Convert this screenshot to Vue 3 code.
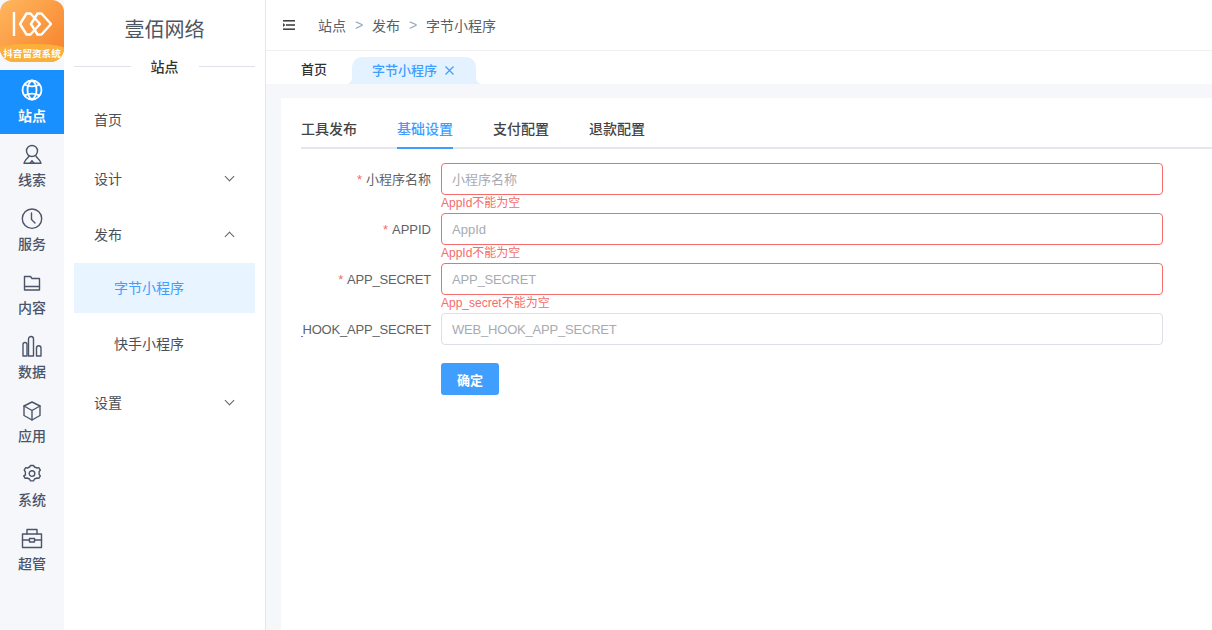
<template>
  <div class="layout">
    <!-- 一级导航 -->
    <aside class="rail">
      <div class="logo">
        <svg class="logo-mark" width="40" height="26" viewBox="0 0 40 26" fill="none" stroke="#fff" stroke-width="2.400" stroke-linejoin="round">
          <path d="M2 1v24" />
          <path d="M14.500 2.500h4L28 13l-9.500 10.500h-4L8 13z" />
          <path d="M25.500 2.500h4L39 13l-9.500 10.500h-4L19 13z" />
        </svg>
        <div class="logo-band">抖音留资系统</div>
      </div>
      <nav class="rail-nav">
        <div v-for="item in railItems" :key="item.label" class="rail-item" :class="{ active: item.active }">
          <svg width="24" height="24" viewBox="0 0 24 24" fill="none" stroke="currentColor" stroke-width="1.4" stroke-linecap="round" stroke-linejoin="round">
            <path v-for="d in item.paths" :key="d" :d="d" />
          </svg>
          <span>{{ item.label }}</span>
        </div>
      </nav>
    </aside>

    <!-- 二级菜单 -->
    <aside class="side">
      <div class="brand">壹佰网络</div>
      <div class="divider"><span>站点</span></div>
      <div class="menu">
        <div class="menu-item first">首页</div>
        <div class="menu-item design">设计<i class="chev"></i></div>
        <div class="menu-item publish">发布<i class="chev up"></i></div>
        <div class="menu-sub active">字节小程序</div>
        <div class="menu-sub">快手小程序</div>
        <div class="menu-item setting">设置<i class="chev"></i></div>
      </div>
    </aside>

    <main class="main">
      <header class="topbar">
        <svg class="fold" width="12" height="10" viewBox="0 0 12 10" fill="#444">
          <rect x="0" y="0" width="12" height="1.600" />
          <rect x="3" y="4.200" width="9" height="1.600" />
          <path d="M0 3 2.400 5 0 7z" />
          <rect x="0" y="8.400" width="12" height="1.600" />
        </svg>
        <span>站点</span><em>&gt;</em><span>发布</span><em>&gt;</em><span>字节小程序</span>
      </header>
      <div class="tabbar">
        <div class="tab">首页</div>
        <div class="tab current">
          字节小程序
          <svg class="close" width="9" height="9" viewBox="0 0 9 9" stroke="#409eff" stroke-width="1.200" fill="none">
            <path d="M.5.500l8 8M8.500.500l-8 8" />
          </svg>
        </div>
      </div>
      <section class="content">
        <div class="card">
          <div class="tabs">
            <div v-for="t in tabs" :key="t" class="tabs-item" :class="{ on: t === '基础设置' }">{{ t }}</div>
          </div>
          <form class="form" @submit.prevent>
            <div v-for="f in fields" :key="f.label" class="row" :class="{ tight: f.tight }">
              <label class="label"><b v-if="f.error">*</b>{{ f.label }}</label>
              <div class="control">
                <input class="input" :class="{ bad: f.error }" :placeholder="f.placeholder" />
                <div v-if="f.error" class="error">{{ f.error }}</div>
              </div>
            </div>
            <div class="row actions">
              <button class="btn" type="button">确定</button>
            </div>
          </form>
        </div>
      </section>
    </main>
  </div>
</template>

<script setup>
const railItems = [
  {
    label: '站点',
    active: true,
    paths: [
      'M12 1.500a9.500 9.500 0 1 0 0 19 9.500 9.500 0 0 0 0-19z',
      'M12 1.500c-6 4-6 15 0 19M12 1.500c6 4 6 15 0 19',
      'M4.500 5.500c4 2.500 11 2.500 15 0M4.500 16.500c4-2.500 11-2.500 15 0',
    ],
  },
  {
    label: '线索',
    paths: [
      'M12 2.500a5.500 5.500 0 1 0 0 11 5.500 5.500 0 0 0 0-11z',
      'M9 13c-.5 2-4 3-5 7.200h17c-1-4.200-4.500-5.200-5-7.200',
      'M10 20.200l2-2.500 2 2.500',
    ],
  },
  {
    label: '服务',
    paths: ['M12 2a9.700 9.700 0 1 0 0 19.400A9.700 9.700 0 0 0 12 2z', 'M11.500 6v6.500l3.500 3.500'],
  },
  {
    label: '内容',
    paths: ['M4.500 5.500h6l1.500 2h7.500v11.500h-15z', 'M4.500 15.500h15'],
  },
  {
    label: '数据',
    paths: [
      'M3 9.500a2 2 0 0 1 4 0V21H3z',
      'M8.500 4a2.500 2.500 0 0 1 5 0V21h-5z',
      'M16.500 13a2.200 2.200 0 0 1 4.500 0V21h-4.500z',
    ],
  },
  {
    label: '应用',
    paths: ['M12 3l8 4v9.500L12 21l-8-4.500V7z', 'M4 7l8 4.500L20 7M12 11.500V21'],
  },
  {
    label: '系统',
    paths: [
      'M9.500 4l1-1.500h3l1 1.500 2.500 1 1.800-.4 1.500 2.600-1.200 1.300v3l1.200 1.300-1.500 2.600-1.800-.4-2.500 1-1 1.900h-3l-1-1.900-2.500-1-1.800.4-1.500-2.600L5.400 12V9L4.200 7.200l1.500-2.600 1.800.4z',
      'M12 7.800a2.800 2.800 0 1 0 0 5.600 2.800 2.800 0 0 0 0-5.600z',
    ],
  },
  {
    label: '超管',
    paths: [
      'M2.500 7h19v13.500h-19z',
      'M7 7V2.500h10V7',
      'M2.500 13h7M14.500 13h7M9.500 11.500h5v3.500h-5z',
    ],
  },
]

const tabs = ['工具发布', '基础设置', '支付配置', '退款配置']

const fields = [
  { label: '小程序名称', placeholder: '小程序名称', error: 'AppId不能为空' },
  { label: 'APPID', placeholder: 'AppId', error: 'AppId不能为空' },
  { label: 'APP_SECRET', placeholder: 'APP_SECRET', error: 'App_secret不能为空', tight: true },
  { label: 'WEB_HOOK_APP_SECRET', placeholder: 'WEB_HOOK_APP_SECRET', error: '', tight: true },
]
</script>

<style scoped>
.layout {
  display: flex;
  width: 1212px;
  height: 630px;
  overflow: hidden;
  background: #fff;
  font-family: "Liberation Sans", "Noto Sans CJK SC", sans-serif;
  font-size: 14px;
  color: #303133;
}

.rail {
  width: 64px;
  flex: none;
  background: #f5f7fa;
}

.logo {
  height: 62px;
  border-radius: 12px 12px 14px 14px;
  background: linear-gradient(135deg, #ffb75e, #f77f2a);
  overflow: hidden;
  display: flex;
  flex-direction: column;
  align-items: center;
  justify-content: space-between;
}

.logo-mark {
  margin-top: 11px;
  flex: none;
}

.logo-band {
  width: 64px;
  height: 18px;
  line-height: 19px;
  border-radius: 50% 50% 0 0 / 4px 4px 0 0;
  background: #fbb03b;
  color: #fff;
  font-size: 9.600px;
  font-weight: 700;
  text-align: center;
  white-space: nowrap;
}

.rail-nav {
  margin-top: 8px;
}

.rail-item {
  height: 64px;
  display: flex;
  flex-direction: column;
  align-items: center;
  padding-top: 9px;
  box-sizing: border-box;
  color: #4c5468;
  font-weight: 500;
}

.rail-item span {
  line-height: 20px;
  margin-top: 3px;
}

.rail-item.active {
  background: #1890ff;
  color: #fff;
  font-weight: 700;
}

.rail-item.active svg {
  stroke-width: 1.800;
}

.side {
  width: 202px;
  flex: none;
  box-sizing: border-box;
  border-right: 1px solid #e6e6e6;
  padding: 0 10px;
}

.brand {
  height: 58px;
  line-height: 60px;
  text-align: center;
  font-size: 20px;
  color: #4b5563;
}

.divider {
  display: flex;
  align-items: center;
  height: 16px;
  gap: 20px;
  font-weight: 500;
  color: #303133;
}

.divider::before,
.divider::after {
  content: "";
  flex: 1;
  height: 1px;
  background: #e0e0ea;
}

.menu-item,
.menu-sub {
  display: flex;
  align-items: center;
  justify-content: space-between;
  height: 50px;
  padding: 0 20px;
  box-sizing: border-box;
  color: #4a4f57;
}

.menu-item.first {
  margin-top: 20px;
}

.menu-item.design {
  margin-top: 9px;
}

.menu-item.publish {
  margin-top: 6px;
}

.menu-sub {
  padding-left: 40px;
  margin-top: 4px;
}

.menu-sub.active {
  padding-bottom: 2px;
  background: #e8f4ff;
  color: #409eff;
}

.menu-sub + .menu-sub {
  margin-top: 5px;
}

.menu-item.setting {
  margin-top: 9px;
}

.chev {
  width: 6px;
  height: 6px;
  margin-right: 2px;
  border-right: 1px solid #606266;
  border-bottom: 1px solid #606266;
  transform: translateY(-2px) rotate(45deg);
}

.chev.up {
  transform: translateY(2px) rotate(225deg);
}

.main {
  flex: 1;
  min-width: 0;
  display: flex;
  flex-direction: column;
}

.topbar {
  height: 51px;
  flex: none;
  box-sizing: border-box;
  border-bottom: 1px solid #f0f0f0;
  display: flex;
  align-items: center;
  padding-left: 17px;
  color: #5a5e66;
}

.fold {
  margin-right: 23px;
  margin-top: -1px;
}

.topbar em {
  width: 26px;
  text-align: center;
  font-style: normal;
  color: #97a8be;
}

.tabbar {
  height: 33px;
  flex: none;
  display: flex;
  font-size: 13px;
  font-weight: 500;
  padding-left: 14px;
}

.tab {
  height: 33px;
  line-height: 38px;
  padding: 0 21px;
  color: #303133;
}

.tab.current {
  position: relative;
  box-sizing: border-box;
  width: 124px;
  height: 27px;
  margin-top: 6px;
  margin-left: 4px;
  padding: 0 0 0 20px;
  line-height: 27px;
  border-radius: 10px 10px 0 0;
  background: #e4f1ff;
  color: #409eff;
}

/* 탭 양쪽 아래 곡선 */
.tab.current::before,
.tab.current::after {
  content: "";
  position: absolute;
  bottom: 0;
  width: 7px;
  height: 7px;
}

.tab.current::before {
  left: -7px;
  background: radial-gradient(circle at 0 0, transparent 7px, #e4f1ff 7.500px);
}

.tab.current::after {
  right: -7px;
  background: radial-gradient(circle at 100% 0, transparent 7px, #e4f1ff 7.500px);
}

.close {
  margin-left: 4px;
}

.content {
  flex: 1;
  min-height: 0;
  background: #f5f7fa;
  padding: 14px 0 0 15px;
}

.card {
  height: 100%;
  background: #fff;
  padding: 12px 0 0 20px;
  box-sizing: border-box;
}

.tabs {
  display: flex;
  gap: 40px;
  height: 37px;
  border-bottom: 2px solid #e4e7ed;
}

.tabs-item {
  height: 37px;
  line-height: 38px;
  font-weight: 500;
  color: #444;
}

.tabs-item.on {
  color: #409eff;
  border-bottom: 2px solid #409eff;
}

.form {
  padding-top: 14px;
}

.row {
  display: flex;
  height: 50px;
  width: 862px;
}

.label {
  width: 140px;
  flex: none;
  padding-right: 10px;
  box-sizing: border-box;
  display: flex;
  justify-content: flex-end;
  overflow: hidden;
  white-space: nowrap;
  line-height: 33px;
  font-size: 13px;
  color: #606266;
}

.label b {
  margin-right: 4px;
  font-weight: 400;
  color: #f56c6c;
}

.control {
  flex: 1;
  position: relative;
}

.input {
  display: block;
  width: 100%;
  height: 32px;
  padding: 0 10px;
  box-sizing: border-box;
  border: 1px solid #dcdfe6;
  border-radius: 4px;
  outline: none;
  font-family: inherit;
  font-size: 13px;
  color: #606266;
}

.input::placeholder {
  color: #a8abb2;
}

.input.bad {
  border-color: #f56c6c;
}

.tight .label,
.tight .input {
  letter-spacing: -0.2px;
}

.error {
  position: absolute;
  top: 32px;
  left: 0;
  font-size: 12px;
  line-height: 16px;
  color: #f56c6c;
}

.actions {
  padding-left: 140px;
  box-sizing: border-box;
}

.btn {
  width: 58px;
  height: 32px;
  border: none;
  border-radius: 3px;
  background: #409eff;
  color: #fff;
  font-family: inherit;
  font-size: 13px;
  font-weight: 700;
}
</style>
